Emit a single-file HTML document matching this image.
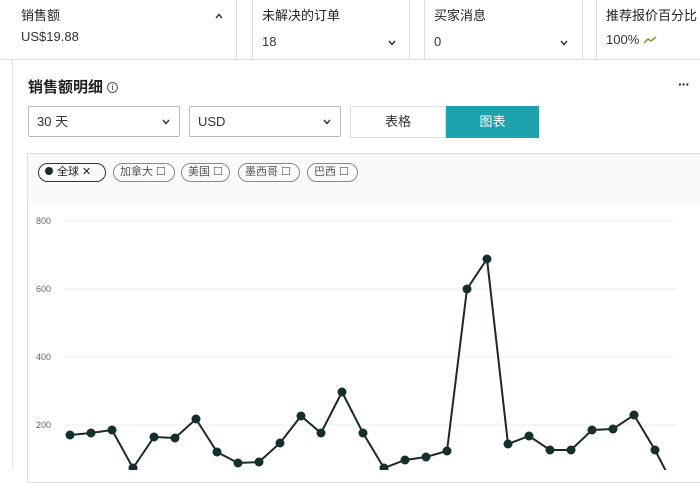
<!DOCTYPE html>
<html><head><meta charset="utf-8"><style>
*{box-sizing:border-box;margin:0;padding:0}
body{width:700px;height:470px;overflow:hidden;background:#fff;font-family:"Liberation Sans","Noto Sans CJK SC",sans-serif;color:#222;position:relative}
.a{position:absolute}
.card{position:absolute;top:-2px;height:62px;border:1px solid #ddd;border-top:none;background:#fff}
.t{font-size:13px;color:#222;position:absolute;left:9px;top:10px;line-height:16px}
.v{font-size:13px;color:#333;position:absolute;left:9px;line-height:16px}
.chev{position:absolute}
.sel{position:absolute;top:106px;height:31px;border:1px solid #bbb;border-radius:2px;font-size:13px;color:#333;padding:0 8px;line-height:29px}
.chip{position:absolute;top:163px;height:19px;border:1px solid #888;border-radius:10px;font-size:11px;color:#555;padding:0 6px;line-height:17px;white-space:nowrap}
</style></head><body>
<div class="a" style="left:0;top:59px;width:700px;height:1px;background:#ddd"></div>
<div class="card" style="left:-1px;width:238px;border-left:none">
 <div class="t" style="left:22px">销售额</div><div class="v" style="left:22px;top:31px">US$19.88</div>
 <svg class="chev" style="left:215px;top:14px" width="10" height="8"><path d="M2 6 L5 2.5 L8 6" fill="none" stroke="#333" stroke-width="1.4"/></svg>
</div>
<div class="card" style="left:252px;width:158px"><div class="t">未解决的订单</div><div class="v" style="top:36px">18</div><svg class="chev" style="left:134px;top:41px" width="10" height="8"><path d="M2 2 L5 5.5 L8 2" fill="none" stroke="#333" stroke-width="1.4"/></svg></div>
<div class="card" style="left:424px;width:159px"><div class="t">买家消息</div><div class="v" style="top:36px">0</div><svg class="chev" style="left:134px;top:41px" width="10" height="8"><path d="M2 2 L5 5.5 L8 2" fill="none" stroke="#333" stroke-width="1.4"/></svg></div>
<div class="card" style="left:596px;width:110px"><div class="t">推荐报价百分比</div><div class="v" style="top:34px">100% <svg width="14" height="10" style="vertical-align:-1px"><path d="M1 8 L5 4 L8 6 L13 2" fill="none" stroke="#7a9a2a" stroke-width="1.5"/></svg></div></div>
<div class="a" style="left:12px;top:60px;width:1px;height:410px;background:#e2e2e2"></div>
<div class="a" style="left:28px;top:78px;font-size:15px;font-weight:bold;color:#222;line-height:20px">销售额明细 <span style="font-weight:normal;border:1px solid #555;border-radius:50%;display:inline-block;width:11px;height:11px;line-height:9px;text-align:center;font-size:8px;vertical-align:2px">i</span></div>
<div class="a" style="left:678px;top:76px;font-size:14px;font-weight:bold;letter-spacing:-1px">···</div>
<div class="sel" style="left:28px;width:152px">30 天<svg style="position:absolute;right:8px;top:11px" width="10" height="8"><path d="M2 2 L5 5.5 L8 2" fill="none" stroke="#333" stroke-width="1.4"/></svg></div>
<div class="sel" style="left:189px;width:152px">USD<svg style="position:absolute;right:8px;top:11px" width="10" height="8"><path d="M2 2 L5 5.5 L8 2" fill="none" stroke="#333" stroke-width="1.4"/></svg></div>
<div class="a" style="left:350px;top:106px;width:96px;height:32px;border:1px solid #ddd;font-size:13px;text-align:center;line-height:30px;color:#333">表格</div>
<div class="a" style="left:446px;top:106px;width:93px;height:32px;background:#1ca3ae;font-size:13px;text-align:center;line-height:32px;color:#fff">图表</div>
<div class="a" style="left:27px;top:153px;width:680px;height:330px;border:1px solid #ddd"></div>
<div class="a" style="left:28px;top:154px;width:672px;height:52px;background:#fafafa"></div>
<div class="chip" style="left:38px;width:68px;border-color:#333;color:#222"><span style="display:inline-block;width:8px;height:8px;border-radius:50%;background:#1a2a2a;margin-right:4px"></span>全球 ✕</div>
<div class="chip" style="left:113px;width:62px">加拿大 ☐</div>
<div class="chip" style="left:181px;width:49px">美国 ☐</div>
<div class="chip" style="left:238px;width:62px">墨西哥 ☐</div>
<div class="chip" style="left:307px;width:51px">巴西 ☐</div>
<svg class="a" style="left:0;top:0" width="700" height="470">
<g stroke="#eee" stroke-width="1"><line x1="64" y1="221" x2="676" y2="221"/><line x1="64" y1="289" x2="676" y2="289"/><line x1="64" y1="357" x2="676" y2="357"/><line x1="64" y1="425" x2="676" y2="425"/></g>
<g font-size="9" fill="#666" font-family="Liberation Sans"><text x="36" y="224">800</text><text x="36" y="292">600</text><text x="36" y="360">400</text><text x="36" y="428">200</text></g>
<polyline fill="none" stroke="#1a2a2a" stroke-width="2" points="70,435 91,433 112,430 133,468 154,437 175,438 196,419 217,452 238,463 259,462 280,443 301,416 321,433 342,392 363,433 384,468 405,460 426,457 447,451 467,289 487,259 508,444 529,436 550,450 571,450 592,430 613,429 634,415 655,450 668,475"/>
<g fill="#13302e"><circle cx="70" cy="435" r="4.5"/><circle cx="91" cy="433" r="4.5"/><circle cx="112" cy="430" r="4.5"/><circle cx="133" cy="468" r="4.5"/><circle cx="154" cy="437" r="4.5"/><circle cx="175" cy="438" r="4.5"/><circle cx="196" cy="419" r="4.5"/><circle cx="217" cy="452" r="4.5"/><circle cx="238" cy="463" r="4.5"/><circle cx="259" cy="462" r="4.5"/><circle cx="280" cy="443" r="4.5"/><circle cx="301" cy="416" r="4.5"/><circle cx="321" cy="433" r="4.5"/><circle cx="342" cy="392" r="4.5"/><circle cx="363" cy="433" r="4.5"/><circle cx="384" cy="468" r="4.5"/><circle cx="405" cy="460" r="4.5"/><circle cx="426" cy="457" r="4.5"/><circle cx="447" cy="451" r="4.5"/><circle cx="467" cy="289" r="4.5"/><circle cx="487" cy="259" r="4.5"/><circle cx="508" cy="444" r="4.5"/><circle cx="529" cy="436" r="4.5"/><circle cx="550" cy="450" r="4.5"/><circle cx="571" cy="450" r="4.5"/><circle cx="592" cy="430" r="4.5"/><circle cx="613" cy="429" r="4.5"/><circle cx="634" cy="415" r="4.5"/><circle cx="655" cy="450" r="4.5"/></g>
</svg>
</body></html>
